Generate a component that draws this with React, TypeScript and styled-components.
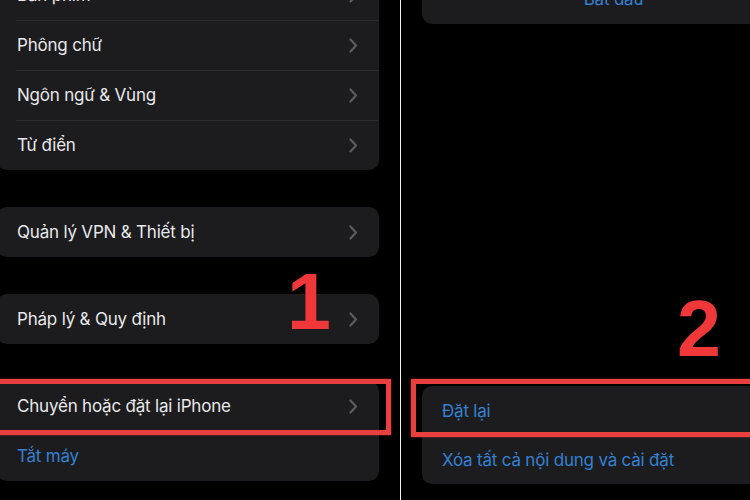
import React from "react";
import styled, { createGlobalStyle } from "styled-components";

const GlobalStyle = createGlobalStyle`
  html, body { margin: 0; padding: 0; background: #000; }
  body { overflow: hidden; }
`;

const Screen = styled.div`
  display: flex;
  width: 750px;
  height: 500px;
  overflow: hidden;
  background: #000;
  font-family: "Inter", "Noto Sans", sans-serif;
`;

const LeftPane = styled.div`
  position: relative;
  width: 400px;
  flex-shrink: 0;
  display: flex;
  flex-direction: column;
  gap: 37px;
  margin-top: -30px;
`;

const Divider = styled.div`
  width: 1px;
  flex-shrink: 0;
  background: #f0f0f0;
`;

const RightPane = styled.div`
  position: relative;
  flex: 1;
  display: flex;
  flex-direction: column;
  justify-content: space-between;
  padding: 0 0 16px 21px;
  margin-top: -26px;
`;

const Card = styled.div<{ $side: "left" | "right" }>`
  background: #1c1c1e;
  border-radius: 10px;
  ${(p) =>
    p.$side === "left"
      ? "margin-left: -3px; width: 382px;"
      : "width: 384px;"}
`;

const Row = styled.div<{ $center?: boolean; $h?: number }>`
  position: relative;
  height: ${(p) => p.$h ?? 50}px;
  display: flex;
  align-items: center;
  justify-content: ${(p) => (p.$center ? "center" : "space-between")};
  padding: 0 21px 0 20px;
  box-sizing: border-box;
  & + &::before {
    content: "";
    position: absolute;
    top: 0;
    left: 19px;
    right: 0;
    height: 1px;
    background: #2c2c2f;
  }
`;

const Label = styled.span<{ $blue?: boolean }>`
  font-size: 17px;
  letter-spacing: -0.2px;
  color: ${(p) => (p.$blue ? "#3481d3" : "#e8e8ea")};
  white-space: nowrap;
`;

const Highlight = styled.div<{ $t: number; $l: number; $r: number; $b: number }>`
  position: absolute;
  z-index: 1;
  top: ${(p) => p.$t}px;
  left: ${(p) => p.$l}px;
  right: ${(p) => p.$r}px;
  bottom: ${(p) => p.$b}px;
  border: 5px solid #e8403f;
  box-shadow: 0 0 2px rgba(232, 64, 63, 0.6);
  pointer-events: none;
`;

const StepNumber = styled.div<{ $top: number; $left: number }>`
  position: absolute;
  top: ${(p) => p.$top}px;
  left: ${(p) => p.$left}px;
  font-family: "Liberation Sans", Arial, sans-serif;
  font-weight: 700;
  font-size: 79px;
  line-height: 1;
  color: #f0383a;
`;

const Chevron = () => (
  <svg width="9" height="15" viewBox="0 0 9 15" fill="none">
    <path
      d="M1.5 1.5 L7 7.5 L1.5 13.5"
      stroke="#5c5c60"
      strokeWidth="2.2"
      strokeLinecap="round"
      strokeLinejoin="round"
    />
  </svg>
);

const NavRow = ({ label }: { label: string }) => (
  <Row>
    <Label>{label}</Label>
    <Chevron />
  </Row>
);

export default function App() {
  return (
    <>
      <GlobalStyle />
      <Screen>
        <LeftPane>
          <Card $side="left">
            <NavRow label="Bàn phím" />
            <NavRow label="Phông chữ" />
            <NavRow label="Ngôn ngữ & Vùng" />
            <NavRow label="Từ điển" />
          </Card>
          <Card $side="left">
            <NavRow label="Quản lý VPN & Thiết bị" />
          </Card>
          <Card $side="left">
            <NavRow label="Pháp lý & Quy định" />
          </Card>
          <Card $side="left">
            <Row>
              <Label>Chuyển hoặc đặt lại iPhone</Label>
              <Chevron />
              <Highlight $t={-2} $l={-7} $r={-12} $b={-4} />
            </Row>
            <Row>
              <Label $blue>Tắt máy</Label>
            </Row>
          </Card>
          <StepNumber $top={292} $left={287}>1</StepNumber>
        </LeftPane>
        <Divider />
        <RightPane>
          <Card $side="right">
            <Row $center>
              <Label $blue>Bắt đầu</Label>
            </Row>
          </Card>
          <Card $side="right">
            <Row>
              <Label $blue>Đặt lại</Label>
              <Highlight $t={-7} $l={-11} $r={-20} $b={-1} />
            </Row>
            <Row $h={48}>
              <Label $blue>Xóa tất cả nội dung và cài đặt</Label>
            </Row>
          </Card>
          <StepNumber $top={315} $left={276}>2</StepNumber>
        </RightPane>
      </Screen>
    </>
  );
}
